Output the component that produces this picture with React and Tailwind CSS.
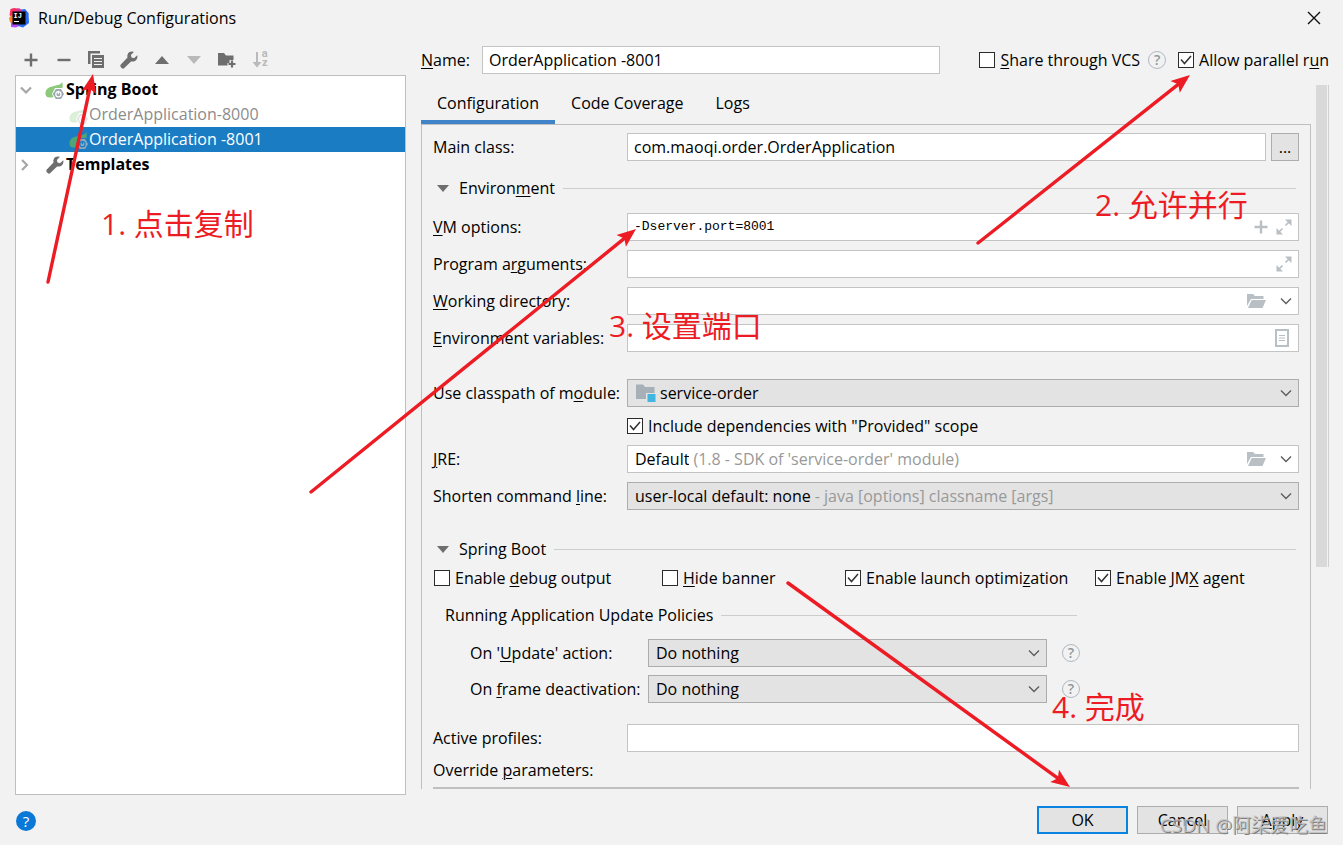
import { useState } from "react";

const updateActions = ["Do nothing", "Update resources", "Update classes and resources", "Hot swap classes"];

const arrows = [
  { from: [48, 282], to: [93, 74] },
  { from: [978, 243], to: [1190, 75] },
  { from: [311, 492], to: [636, 229] },
  { from: [788, 583], to: [1070, 787] },
];

// Text with one underlined mnemonic letter, marked by "_" in front of it.
function Mnemonic({ text }) {
  const at = text.indexOf("_");
  if (at < 0) return <span>{text}</span>;
  return (
    <span>
      {text.slice(0, at)}
      <span className="underline decoration-1 underline-offset-2">{text[at + 1]}</span>
      {text.slice(at + 2)}
    </span>
  );
}

function IdeaLogo() {
  return (
    <svg width="20" height="20" viewBox="0 0 20 20" aria-hidden="true">
      <path d="M1.500 1 5 0 11 1 12 5 3 10 0.500 7Z" fill="#fe2d5d" />
      <path d="M0 10 4 6 8 12 5 18 1 14Z" fill="#fc801d" />
      <path d="M2 15 8 12 12 17 7 19.500 2 19Z" fill="#b74af7" />
      <path d="M12 1.500 16 1 19.500 5 20 15 14 19.500 9 18Z" fill="#2b6cf0" />
      <path d="M8 0.500 11 0.500 14 4 7 4Z" fill="#d0369b" />
      <rect x="3.500" y="3.500" width="13" height="13" fill="#000" />
      <text x="4.500" y="10" fontSize="7" fontWeight="700" fontFamily="Liberation Mono, monospace" fill="#fff">IJ</text>
      <rect x="5" y="13" width="5" height="1" fill="#fff" />
    </svg>
  );
}

function PlusIcon({ color = "#6e6e6e" }) {
  return (
    <svg width="14" height="14" viewBox="0 0 14 14" stroke={color} strokeWidth="2.4" aria-hidden="true">
      <path d="M7 0.500v13M0.500 7h13" />
    </svg>
  );
}

function MinusIcon() {
  return (
    <svg width="14" height="14" viewBox="0 0 14 14" stroke="#6e6e6e" strokeWidth="2.4" aria-hidden="true">
      <path d="M0.500 7h13" />
    </svg>
  );
}

function CopyIcon() {
  return (
    <svg width="17" height="18" viewBox="0 0 17 18" aria-hidden="true">
      <path d="M0 0h12v2.500H2.500V13H0z" fill="#6e6e6e" />
      <path d="M4 4h12v13H4z" fill="#6e6e6e" />
      <path d="M6 7.500h8M6 10.500h8M6 13.500h8" stroke="#f2f2f2" strokeWidth="1.2" />
    </svg>
  );
}

function WrenchIcon() {
  return (
    <svg width="18" height="18" viewBox="0 0 18 18" aria-hidden="true">
      <path
        d="M17.300 4.200 14 7.200 11.500 6.500 10.900 4 13.800 0.900C11.500 0 8.900 0.800 7.800 2.900c-.6 1.200-.7 2.500-.3 3.700L0.800 13.600c-.7.8-.6 2 .1 2.700l.8.800c.8.7 1.900.7 2.600 0l6.800-6.700c1.300.4 2.700.2 3.900-.5 1.900-1.100 2.900-3.500 2.300-5.700z"
        fill="#6e6e6e"
      />
    </svg>
  );
}

function FolderPlusIcon() {
  return (
    <svg width="18" height="16" viewBox="0 0 18 16" aria-hidden="true">
      <path d="M0 1h6l2 2.500h7.500V8h-4v3h-2v2.500H0z" fill="#6e6e6e" />
      <path d="M14 8.500v7M10.500 12h7" stroke="#6e6e6e" strokeWidth="2.2" />
    </svg>
  );
}

function SortIcon() {
  return (
    <span className="flex items-center font-['Roboto',sans-serif] text-[11px] leading-[9px] font-bold text-[#b9b9b9]">
      <svg width="10" height="16" viewBox="0 0 10 16" aria-hidden="true">
        <path d="M4 0h2v10h3.500L5 15.500.500 10H4z" fill="#b9b9b9" />
      </svg>
      <span className="flex flex-col pb-1">
        <span>a</span>
        <span>z</span>
      </span>
    </span>
  );
}

function Triangle({ up, color }) {
  return (
    <svg width="14" height="8" viewBox="0 0 14 8" fill={color} aria-hidden="true">
      <path d={up ? "M0 8 7 0l7 8z" : "M0 0h14L7 8z"} />
    </svg>
  );
}

function ChevronIcon({ right, color = "#5a5a5a", bold }) {
  return (
    <svg width="12" height="12" viewBox="0 0 12 12" fill="none" stroke={color} strokeWidth={bold ? 2.2 : 1.3} aria-hidden="true">
      <path d={right ? "M3 1l5 5-5 5" : "M1 3.500l5 5 5-5"} />
    </svg>
  );
}

function SpringIcon({ leaf = "#8cc97a", gear = "#9aa7b0", hole = "#fff" }) {
  return (
    <svg width="20" height="18" viewBox="0 0 20 18" className="mt-0.5" aria-hidden="true">
      <path d="M17.500 0C15 4 9 3.200 4.500 5.300 1 7 0 10 0.700 13c.3 1.200 1 2 2.300 2.200 2 .3 5 .3 8-.4C15 13.500 18.500 9 17.500 0z" fill={leaf} />
      <path d="M10 6h7.500l3 6-3 6H10l-3-6z" fill={hole} />
      <path d="M10.800 7H16l3 5-3 5h-5.200l-3-5z" fill={gear} />
      <circle cx="13.400" cy="12.300" r="2.600" fill="none" stroke={hole} strokeWidth="1.200" />
      <path d="M13.400 8.800v3.500" stroke={hole} strokeWidth="1.200" />
    </svg>
  );
}

function ExpandIcon() {
  return (
    <svg width="16" height="16" viewBox="0 0 16 16" fill="#b9bfc4" stroke="#b9bfc4" aria-hidden="true">
      <path d="M9 0.500h6.500V7zM0.500 9v6.500H7z" stroke="none" />
      <path d="M9.500 6.500 13 3M3 13l3.500-3.500" strokeWidth="1.600" />
    </svg>
  );
}

function OpenFolderIcon() {
  return (
    <svg width="19" height="14" viewBox="0 0 19 14" fill="#b9c0c5" aria-hidden="true">
      <path d="M0 0h6l2 2h8.500v3H4L0 12z" />
      <path d="M4.700 6H19l-3.500 8H1z" />
    </svg>
  );
}

function ListIcon() {
  return (
    <svg width="14" height="18" viewBox="0 0 14 18" fill="none" stroke="#b9c0c5" aria-hidden="true">
      <rect x="1" y="1" width="12" height="16" strokeWidth="2" />
      <path d="M4 6.500h6M4 9h6M4 11.500h6" />
    </svg>
  );
}

function ModuleIcon() {
  return (
    <svg width="20" height="18" viewBox="0 0 20 18" aria-hidden="true">
      <path d="M0 0.500h7l2 2.500h9.500v6H10v6H0z" fill="#a5b0b8" />
      <rect x="11.500" y="10" width="8" height="8" fill="#40b6e0" />
    </svg>
  );
}

function HelpIcon() {
  return (
    <button
      type="button"
      aria-label="Help"
      className="flex h-[18px] w-[18px] shrink-0 items-center justify-center rounded-full border border-[#aeb9c0] text-[14px] leading-4 font-semibold text-[#8d989f]"
    >
      ?
    </button>
  );
}

function CheckBox({ label, defaultChecked = false }) {
  return (
    <label className="flex h-6 items-center gap-[5px] whitespace-nowrap">
      <span className="grid">
        <input
          type="checkbox"
          defaultChecked={defaultChecked}
          className="peer col-start-1 row-start-1 h-4 w-4 appearance-none border border-[#2b2b2b] bg-white"
        />
        <svg
          viewBox="0 0 16 16"
          className="pointer-events-none invisible col-start-1 row-start-1 h-4 w-4 peer-checked:visible"
          fill="none"
          stroke="#333"
          strokeWidth="1.500"
          aria-hidden="true"
        >
          <path d="M3 7.500 6.500 11.500 13 4" />
        </svg>
      </span>
      <Mnemonic text={label} />
    </label>
  );
}

function Row({ label, id, children }) {
  return (
    <div className="flex h-7 items-center">
      <label htmlFor={id} className="w-[194px] shrink-0 whitespace-nowrap">
        <Mnemonic text={label} />
      </label>
      {children}
    </div>
  );
}

function TextField({ id, value = "", mono = false, children }) {
  return (
    <div className="flex h-7 min-w-0 flex-1 items-center gap-2 border border-[#c4c4c4] bg-white px-1.5">
      <input
        id={id}
        type="text"
        defaultValue={value}
        className={
          mono
            ? "min-w-0 flex-1 bg-transparent font-['Liberation_Mono',monospace] text-[13px] outline-none"
            : "min-w-0 flex-1 bg-transparent outline-none"
        }
      />
      {children}
    </div>
  );
}

function ComboBox({ id, options, hint, light = false, icon, browse = false }) {
  return (
    <div
      className={
        light
          ? "flex h-7 min-w-0 flex-1 items-center border border-[#c4c4c4] bg-white pr-[6px] pl-[7px]"
          : "flex h-7 min-w-0 flex-1 items-center border border-[#adadad] bg-[#e3e3e3] pr-[6px] pl-[7px]"
      }
    >
      {icon && <span className="mr-1 ml-px">{icon}</span>}
      <select
        id={id}
        className={
          hint
            ? "field-sizing-content appearance-none bg-transparent outline-none"
            : "min-w-0 flex-1 appearance-none bg-transparent outline-none"
        }
      >
        {options.map((option) => (
          <option key={option}>{option}</option>
        ))}
      </select>
      {hint && <span className="flex-1 pl-1 whitespace-nowrap text-[#999]">{hint}</span>}
      {browse && (
        <button type="button" aria-label="Browse" className="mr-[14px]">
          <OpenFolderIcon />
        </button>
      )}
      <ChevronIcon />
    </div>
  );
}

function SectionTitle({ label, className }) {
  return (
    <div className={`flex h-6 items-center ${className}`}>
      <button type="button" className="flex items-center gap-[10px] pl-1">
        <svg width="12" height="7" viewBox="0 0 12 7" fill="#6e6e6e" aria-hidden="true">
          <path d="M0 0h12L6 7z" />
        </svg>
        <Mnemonic text={label} />
      </button>
      <div className="mr-[3px] ml-2 h-px flex-1 bg-[#cdcdcd]" />
    </div>
  );
}

function Toolbar() {
  const tools = [
    ["Add", <PlusIcon key="i" />],
    ["Remove", <MinusIcon key="i" />],
    ["Copy", <CopyIcon key="i" />],
    ["Edit templates", <WrenchIcon key="i" />],
    ["Move up", <Triangle key="i" up color="#6e6e6e" />],
    ["Move down", <Triangle key="i" color="#b9b9b9" />],
    ["Create folder", <FolderPlusIcon key="i" />],
    ["Sort", <SortIcon key="i" />],
  ];
  return (
    <div className="grid h-[39px] w-[261px] grid-cols-8 items-center pt-[9px]">
      {tools.map(([name, icon]) => (
        <button key={name} type="button" aria-label={name} className="flex h-6 items-center justify-center">
          {icon}
        </button>
      ))}
    </div>
  );
}

function ConfigTree() {
  return (
    <ul className="flex-1 border border-[#bfbfbf] bg-white pt-px">
      <li className="flex h-[25px] items-center pl-1 font-bold">
        <ChevronIcon bold color="#a6a6a6" />
        <span className="ml-[13px]">
          <SpringIcon />
        </span>
        <span className="ml-px pb-0.5">Spring Boot</span>
      </li>
      <li className="flex h-[25px] items-center pl-[53px] text-[#8c8c8c]">
        <SpringIcon leaf="#dcefd8" gear="#dfe3e6" />
        <span className="pb-0.5">OrderApplication-8000</span>
      </li>
      <li className="flex h-[25px] items-center bg-[#1a7dc4] pl-[53px] text-white">
        <SpringIcon leaf="#4ea575" gear="#8fa9bd" hole="#1a7dc4" />
        <span className="pb-0.5">OrderApplication -8001</span>
      </li>
      <li className="flex h-[25px] items-center pl-[3px] font-bold">
        <ChevronIcon bold right color="#a6a6a6" />
        <span className="ml-[15px]">
          <WrenchIcon />
        </span>
        <span className="ml-0.5 pb-0.5">Templates</span>
      </li>
    </ul>
  );
}

function Arrow({ from, to }) {
  const dx = to[0] - from[0];
  const dy = to[1] - from[1];
  const length = Math.hypot(dx, dy);
  const angle = (Math.atan2(dy, dx) * 180) / Math.PI;
  return (
    <g transform={`translate(${from[0]} ${from[1]}) rotate(${angle})`}>
      <path d={`M0 0H${length - 13}`} stroke="#ed1c24" strokeWidth="3.400" strokeLinecap="round" />
      <path d={`M${length} 0l-19 -7.500 4 7.500 -4 7.500z`} fill="#ed1c24" />
    </g>
  );
}

function Note({ className, children }) {
  return (
    <p className={`absolute text-[30px] leading-10 whitespace-nowrap text-[#ed1c24] ${className}`}>{children}</p>
  );
}

function Annotations() {
  return (
    <div className="pointer-events-none absolute inset-0 overflow-hidden font-['Open_Sans','Noto_Sans_CJK_SC',sans-serif]">
      <svg width="1343" height="845" viewBox="0 0 1343 845" className="absolute top-0 left-0" aria-hidden="true">
        {arrows.map((arrow) => (
          <Arrow key={arrow.from.join()} {...arrow} />
        ))}
      </svg>
      <Note className="top-[204px] left-[101px]">1. 点击复制</Note>
      <Note className="top-[185px] left-[1095px]">2. 允许并行</Note>
      <Note className="top-[306px] left-[609px]">3. 设置端口</Note>
      <Note className="top-[687px] left-[1052px]">4. 完成</Note>
      <p className="absolute right-4 bottom-2 text-[19px] leading-6 whitespace-nowrap text-[#c4c4c4]/80 [text-shadow:1px_1px_0_#808080]">
        CSDN @阿柒爱吃鱼
      </p>
    </div>
  );
}

export default function App() {
  const [tab, setTab] = useState("Configuration");

  return (
    <div className="relative flex min-h-screen flex-col bg-[#f2f2f2] font-['Open_Sans','Noto_Sans_CJK_SC',sans-serif] text-[16px] leading-6 text-black">
      <header className="flex h-9 items-center pr-[22px] pl-[9px]">
        <IdeaLogo />
        <h1 className="ml-[9px] flex-1">Run/Debug Configurations</h1>
        <button type="button" aria-label="Close">
          <svg width="14" height="14" viewBox="0 0 14 14" stroke="#111" strokeWidth="1.400" aria-hidden="true">
            <path d="M1 1l12 12M13 1 1 13" />
          </svg>
        </button>
      </header>

      <main className="flex flex-1 gap-[15px] pr-[14px] pl-[15px]">
        <aside className="flex w-[391px] shrink-0 flex-col">
          <Toolbar />
          <ConfigTree />
        </aside>

        <section className="flex min-w-0 flex-1 flex-col">
          <div className="flex h-12 items-center">
            <label htmlFor="name" className="w-[61px] shrink-0">
              <Mnemonic text="_Name:" />
            </label>
            <TextField id="name" value="OrderApplication -8001" />
            <div className="ml-[39px] flex shrink-0 items-center">
              <CheckBox label="_Share through VCS" />
              <span className="mr-3 ml-2 flex">
                <HelpIcon />
              </span>
              <CheckBox label="Allow parallel r_un" defaultChecked />
            </div>
          </div>

          <div className="flex flex-1 gap-[5px] pb-[6px]">
            <div className="flex min-w-0 flex-1 flex-col">
              <nav className="flex h-10">
                {["Configuration", "Code Coverage", "Logs"].map((name) => (
                  <button
                    key={name}
                    type="button"
                    onClick={() => setTab(name)}
                    className={
                      tab === name
                        ? "border-b-4 border-[#4083c9] px-4 pt-0.5"
                        : "border-b-4 border-transparent px-4 pt-0.5"
                    }
                  >
                    {name}
                  </button>
                ))}
              </nav>

              <div className="flex-1 border-x border-t border-[#bfbfbf] pt-2 pr-[11px] pl-[11px]">
                <Row id="main-class" label="Main class:">
                  <TextField id="main-class" value="com.maoqi.order.OrderApplication" />
                  <button
                    type="button"
                    aria-label="Browse for main class"
                    className="ml-[5px] h-7 w-7 border border-[#adadad] bg-[#e3e3e3]"
                  >
                    ...
                  </button>
                </Row>

                <SectionTitle label="Environ_ment" className="mt-[15px] mb-[13px]" />
                <div className="flex flex-col gap-[9px]">
                  <Row id="vm-options" label="_VM options:">
                    <TextField id="vm-options" value="-Dserver.port=8001" mono>
                      <PlusIcon color="#b9bfc4" />
                      <ExpandIcon />
                    </TextField>
                  </Row>
                  <Row id="arguments" label="Program a_rguments:">
                    <TextField id="arguments">
                      <ExpandIcon />
                    </TextField>
                  </Row>
                  <Row id="directory" label="_Working directory:">
                    <ComboBox id="directory" options={[""]} light browse />
                  </Row>
                  <Row id="variables" label="_Environment variables:">
                    <TextField id="variables">
                      <span className="mr-[3px]">
                        <ListIcon />
                      </span>
                    </TextField>
                  </Row>
                </div>

                <div className="mt-[27px] flex flex-col gap-[7px]">
                  <Row id="classpath" label="Use classpath of m_odule:">
                    <ComboBox id="classpath" options={["service-order"]} icon={<ModuleIcon />} />
                  </Row>
                  <div className="ml-[194px]">
                    <CheckBox label={'Include dependencies with "Provided" scope'} defaultChecked />
                  </div>
                  <Row id="jre" label="_JRE:">
                    <ComboBox id="jre" options={["Default"]} hint="(1.8 - SDK of 'service-order' module)" light browse />
                  </Row>
                </div>
                <div className="mt-[9px]">
                  <Row id="shorten" label="Shorten command _line:">
                    <ComboBox
                      id="shorten"
                      options={["user-local default: none"]}
                      hint="- java [options] classname [args]"
                    />
                  </Row>
                </div>

                <SectionTitle label="Sprin_g Boot" className="mt-[27px] mb-[5px]" />
                <div className="grid grid-cols-[228px_183px_250px_auto] pl-px">
                  <CheckBox label="Enable _debug output" />
                  <CheckBox label="_Hide banner" />
                  <CheckBox label="Enable launch optimi_zation" defaultChecked />
                  <CheckBox label="Enable JM_X agent" defaultChecked />
                </div>

                <div className="mt-[13px] mr-[222px] ml-3 flex h-6 items-center gap-2">
                  <h2 className="whitespace-nowrap">Running Application Update Policies</h2>
                  <div className="h-px flex-1 bg-[#cdcdcd]" />
                </div>
                <div className="mt-3 mr-[219px] ml-[37px] flex flex-col gap-2">
                  {[
                    ["on-update", "On '_Update' action:"],
                    ["on-frame", "On _frame deactivation:"],
                  ].map(([id, label]) => (
                    <div key={id} className="flex h-7 items-center">
                      <label htmlFor={id} className="w-[178px] shrink-0 whitespace-nowrap">
                        <Mnemonic text={label} />
                      </label>
                      <ComboBox id={id} options={updateActions} />
                      <span className="ml-[15px] flex">
                        <HelpIcon />
                      </span>
                    </div>
                  ))}
                </div>

                <div className="mt-[21px]">
                  <Row id="profiles" label="Active profiles:">
                    <TextField id="profiles" />
                  </Row>
                </div>
                <h2 className="mt-[6px]">
                  <Mnemonic text="Override _parameters:" />
                </h2>
                <div className="mt-[5px] h-0.5 bg-[#bfbfbf]" />
              </div>
            </div>

            <div className="w-[13px] shrink-0">
              <div className="mt-px h-[482px] border-r border-[#d0d0d0] pr-px">
                <div className="h-full bg-[#d9d9d9]" />
              </div>
            </div>
          </div>
        </section>
      </main>

      <footer className="flex h-[50px] items-center gap-[9px] pr-[15px] pl-4">
        <button
          type="button"
          aria-label="Help"
          className="mt-0.5 mr-auto flex h-5 w-5 items-center justify-center rounded-full bg-[#0a78d6] text-[15px] leading-5 text-white"
        >
          ?
        </button>
        <button type="button" className="h-7 w-[91px] border-2 border-[#0a84e0] bg-[#e3e3e3] leading-5">
          OK
        </button>
        <button type="button" className="h-7 w-[91px] border border-[#adadad] bg-[#e3e3e3] leading-5">
          Cancel
        </button>
        <button type="button" className="h-7 w-[91px] border border-[#adadad] bg-[#e3e3e3] leading-5">
          <Mnemonic text="_Apply" />
        </button>
      </footer>

      <Annotations />
    </div>
  );
}
